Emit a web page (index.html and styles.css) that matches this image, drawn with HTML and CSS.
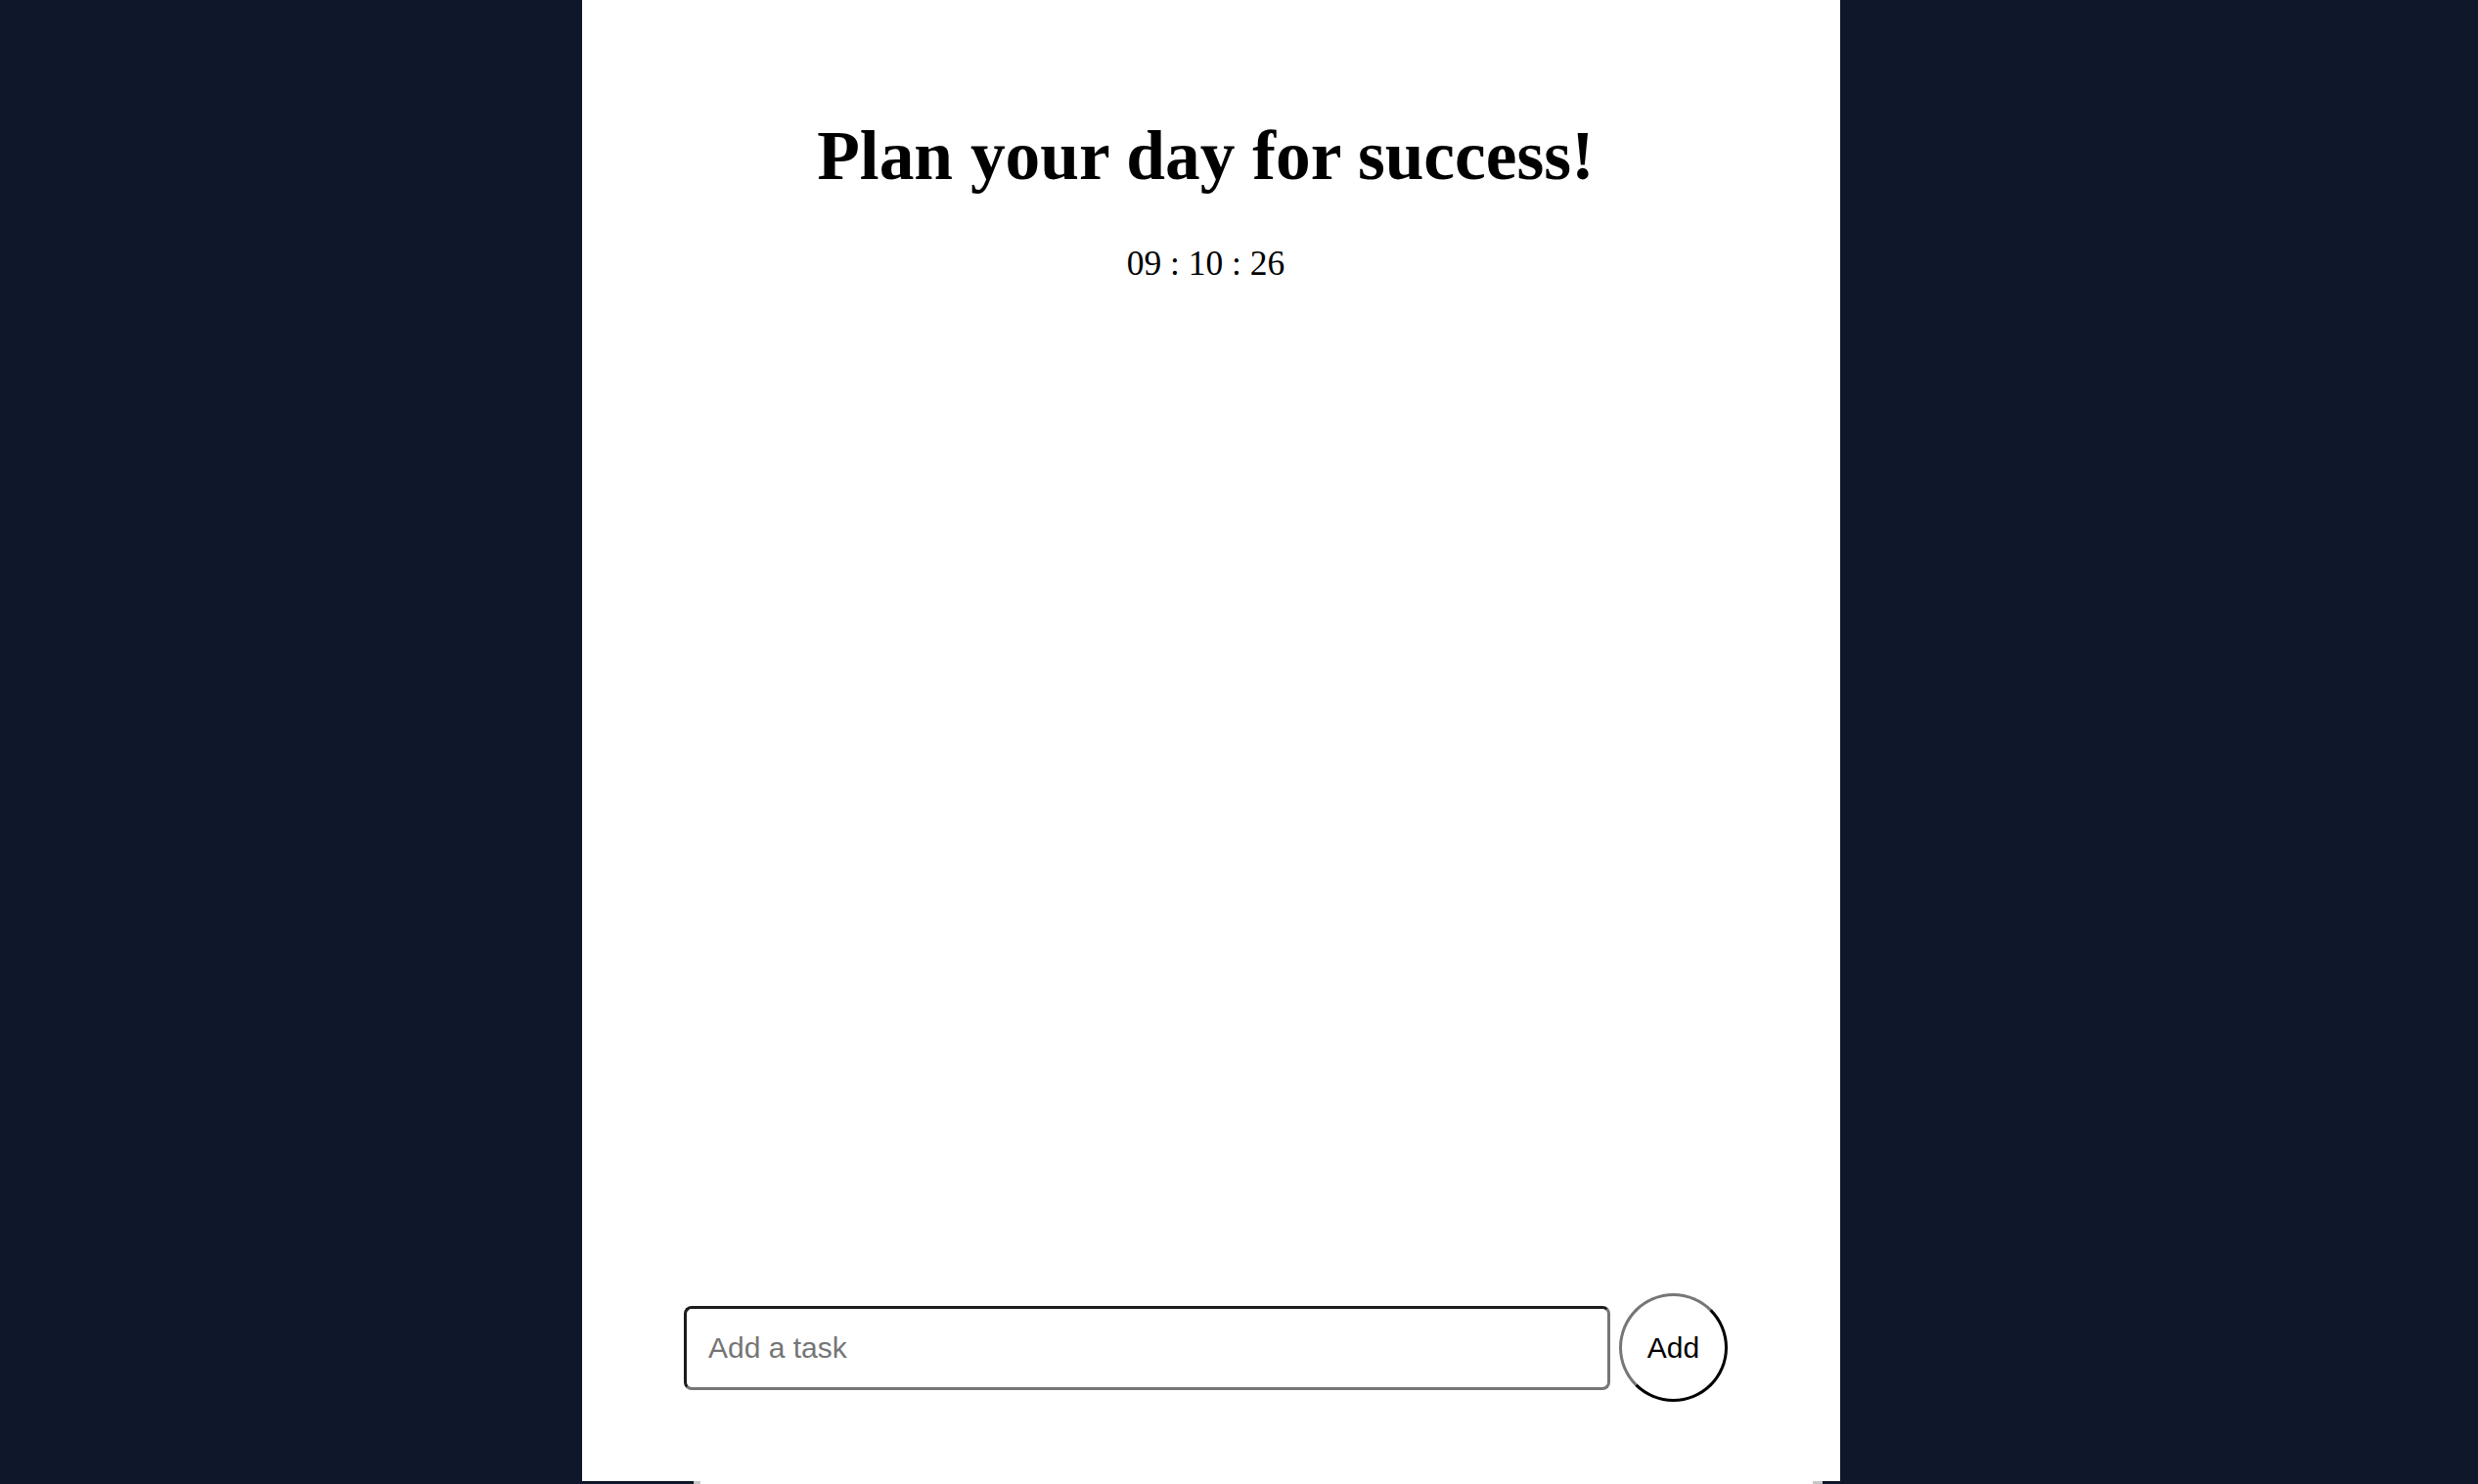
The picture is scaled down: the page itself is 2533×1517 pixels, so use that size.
FILE: index.html
```html
<!DOCTYPE html>
<html>
<head>
  <meta charset="UTF-8">
  <link rel="stylesheet" href="styles.css">
  <title>Planner</title>
</head>
<body>
  <div class="page">
    <h1 class="title">Plan your day for success!</h1>
    <p class="clock" id="clock">09 : 10 : 26</p>

    <ul class="tasks" id="tasks"></ul>

    <form class="add-form" id="addForm">
      <input class="task-input" type="text" placeholder="Add a task">
      <button class="add-btn" type="submit">Add</button>
    </form>
  </div>
  <div class="edge"><div class="edge-bar"></div></div>
</body>
</html>
```

FILE: styles.css
```css
body {
  margin: 0;
  background: #0f172a;
  overflow: hidden;
}

.page {
  width: 1286px;
  height: 1514px;
  margin-left: 595px;
  box-sizing: border-box;
  padding: 119px 115px 81px 104px;
  background: #fff;
  display: flex;
  flex-direction: column;
}

.title {
  margin: 0;
  font-family: "Liberation Serif", "Times New Roman", serif;
  font-size: 71.4px;
  line-height: 80px;
  font-weight: bold;
  text-align: center;
  color: #000;
}

.clock {
  margin: 50px 0 0;
  font-family: "Liberation Serif", "Times New Roman", serif;
  font-size: 35.5px;
  line-height: 40px;
  text-align: center;
  color: #000;
}

.tasks {
  margin: 0;
  padding: 0;
  list-style: none;
}

.add-form {
  margin-top: auto;
  display: flex;
  align-items: center;
  gap: 9px;
}

.task-input {
  flex: 1;
  height: 86px;
  box-sizing: border-box;
  padding: 0 22px;
  border: 3px solid;
  border-color: #1c1c1c #767676 #767676 #1c1c1c;
  border-radius: 8px;
  font-family: "Liberation Sans", Arial, sans-serif;
  font-size: 30px;
  outline: none;
}

.task-input::placeholder {
  color: #757575;
}

.add-btn {
  width: 111px;
  height: 111px;
  box-sizing: border-box;
  padding: 0;
  border: 3px solid;
  border-color: #767676 #000 #000 #767676;
  border-radius: 50%;
  background: #fff;
  font-family: "Liberation Sans", Arial, sans-serif;
  font-size: 30px;
  color: #000;
  cursor: pointer;
}

.edge {
  width: 1286px;
  height: 3px;
  margin-left: 595px;
}

.edge-bar {
  height: 3px;
  margin: 0 18px 0 114px;
  box-sizing: border-box;
  background: #fff;
  border-left: 7px solid #c8c8c8;
  border-right: 10px solid #c8c8c8;
}
```
